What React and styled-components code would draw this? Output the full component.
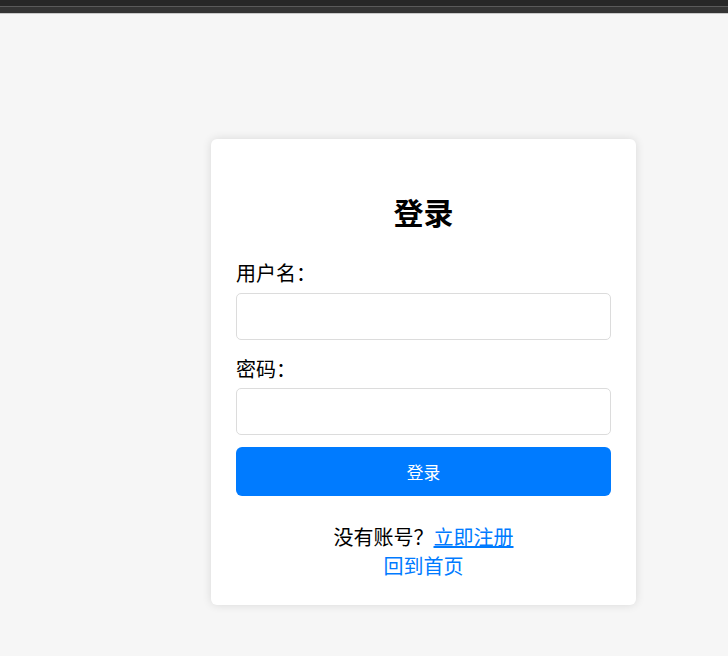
import React from "react";
import styled, { createGlobalStyle } from "styled-components";

const GlobalStyle = createGlobalStyle`
  html, body {
    margin: 0;
    padding: 0;
    background: #f6f6f6;
    font-family: "Noto Sans CJK SC", "Noto Sans", sans-serif;
    color: #000;
  }
  * { box-sizing: border-box; }
`;

const TopBar = styled.div`
  height: 14px;
  background: linear-gradient(
    to bottom,
    #272727 0px,
    #272727 6px,
    #5a5a5a 6px,
    #5a5a5a 7px,
    #343434 7px,
    #343434 13px,
    #c9c9c9 13px,
    #c9c9c9 14px
  );
`;

const Page = styled.main`
  display: flex;
  align-items: flex-start;
  padding: 125px 0 40px 211px;
`;

const Card = styled.div`
  width: 425px;
  background: #fff;
  border-radius: 6px;
  box-shadow: 0 0 10px rgba(0, 0, 0, 0.12);
  padding: 25px;
`;

const Title = styled.h2`
  margin: 25px 0;
  text-align: center;
  font-size: 30px;
  font-weight: 700;
`;

const Field = styled.div`
  margin-bottom: 14px;
`;

const Label = styled.label`
  display: block;
  font-size: 20px;
  margin-bottom: 5.5px;
`;

const Input = styled.input`
  display: block;
  width: 100%;
  height: 47px;
  border: 1px solid #dcdcdc;
  border-radius: 5px;
  padding: 0 12px;
  font-size: 18px;
  font-family: inherit;
  outline: none;
  background: #fff;
`;

const Button = styled.button`
  display: block;
  width: 100%;
  height: 49px;
  margin-top: -2px;
  border: none;
  border-radius: 6px;
  background: #007bff;
  color: #fff;
  font-size: 16.7px;
  font-family: inherit;
  cursor: pointer;
`;

const Footer = styled.div`
  margin-top: 26px;
  text-align: center;
  font-size: 20px;
`;

const Line = styled.p`
  margin: 0;
`;

const Link = styled.a`
  color: #007bff;
  text-decoration: ${(p) => (p.$underline ? "underline" : "none")};
  cursor: pointer;
`;

export default function App() {
  return (
    <>
      <GlobalStyle />
      <TopBar />
      <Page>
        <Card>
          <Title>登录</Title>
          <Field>
            <Label htmlFor="username">用户名：</Label>
            <Input id="username" type="text" />
          </Field>
          <Field>
            <Label htmlFor="password">密码：</Label>
            <Input id="password" type="password" />
          </Field>
          <Button type="button">登录</Button>
          <Footer>
            <Line>
              没有账号？<Link $underline>立即注册</Link>
            </Line>
            <Line>
              <Link>回到首页</Link>
            </Line>
          </Footer>
        </Card>
      </Page>
    </>
  );
}
